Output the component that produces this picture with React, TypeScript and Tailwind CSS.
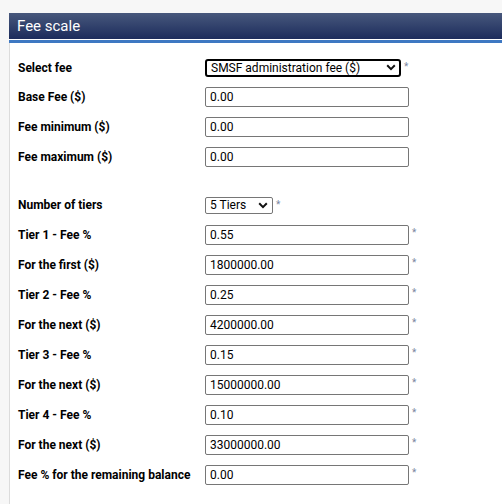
import React from "react";

const font = { fontFamily: "Roboto, 'Liberation Sans', Arial, sans-serif" };

type Row = { label: string; value: string; required?: boolean };

const topRows: Row[] = [
  { label: "Base Fee ($)", value: "0.00" },
  { label: "Fee minimum ($)", value: "0.00" },
  { label: "Fee maximum ($)", value: "0.00" },
];

const tierRows: Row[] = [
  { label: "Tier 1 - Fee %", value: "0.55", required: true },
  { label: "For the first ($)", value: "1800000.00", required: true },
  { label: "Tier 2 - Fee %", value: "0.25", required: true },
  { label: "For the next ($)", value: "4200000.00", required: true },
  { label: "Tier 3 - Fee %", value: "0.15", required: true },
  { label: "For the next ($)", value: "15000000.00", required: true },
  { label: "Tier 4 - Fee %", value: "0.10", required: true },
  { label: "For the next ($)", value: "33000000.00", required: true },
  { label: "Fee % for the remaining balance", value: "0.00", required: true },
];

function Star() {
  return <span className="ml-[3px] self-start pt-[3px] text-[10px] leading-none text-[#7a86a0]">*</span>;
}

function Chevron() {
  return (
    <svg width="10" height="7" viewBox="0 0 10 7" className="pointer-events-none">
      <path d="M1.2 1.3 5 5.1 8.8 1.3" fill="none" stroke="#111" strokeWidth="2" />
    </svg>
  );
}

function InputRow({ label, value, required }: Row) {
  return (
    <div className="flex h-[30px] items-center">
      <div className="w-[187px] shrink-0 text-[12px] font-bold text-black">{label}</div>
      <div className="flex items-center">
        <div className="flex h-[20px] w-[204px] items-center rounded-[2px] border border-[#767676] bg-white px-[4px] text-[12px] text-black">
          {value}
        </div>
        {required && <Star />}
      </div>
    </div>
  );
}

export default function App() {
  return (
    <div className="min-h-[504px] bg-[#f7f7f7] pl-[9px] pt-[13px]" style={font}>
      <div className="flex h-[26px] items-center bg-gradient-to-b from-[#48587c] to-[#1d2c5c] pl-[8px] text-[15px] text-white">
        Fee scale
      </div>
      <div className="h-[1px] bg-white" />
      <div className="h-[3px] bg-[#3e78c2]" />
      <div className="min-h-[461px] border-l border-[#dcdcdc] bg-white pl-[8px] pt-[10px]">
        <div className="flex h-[29px] items-center">
          <div className="w-[187px] shrink-0 text-[12px] font-bold text-black">Select fee</div>
          <div className="flex items-center">
            <div className="flex h-[18px] w-[196px] items-center justify-between rounded-[3px] border-2 border-black bg-white pl-[4px] pr-[3px] text-[12px] text-black">
              <span>SMSF administration fee ($)</span>
              <Chevron />
            </div>
            <Star />
          </div>
        </div>
        {topRows.map((r) => (
          <InputRow key={r.label} {...r} />
        ))}
        <div className="h-[18px]" />
        <div className="flex h-[30px] items-center">
          <div className="w-[187px] shrink-0 text-[12px] font-bold text-black">Number of tiers</div>
          <div className="flex items-center">
            <div className="flex h-[17px] w-[68px] items-center justify-between rounded-[2px] border border-[#767676] bg-white pl-[4px] pr-[4px] text-[12px] text-black">
              <span>5 Tiers</span>
              <Chevron />
            </div>
            <Star />
          </div>
        </div>
        {tierRows.map((r, i) => (
          <InputRow key={i} {...r} />
        ))}
      </div>
    </div>
  );
}
